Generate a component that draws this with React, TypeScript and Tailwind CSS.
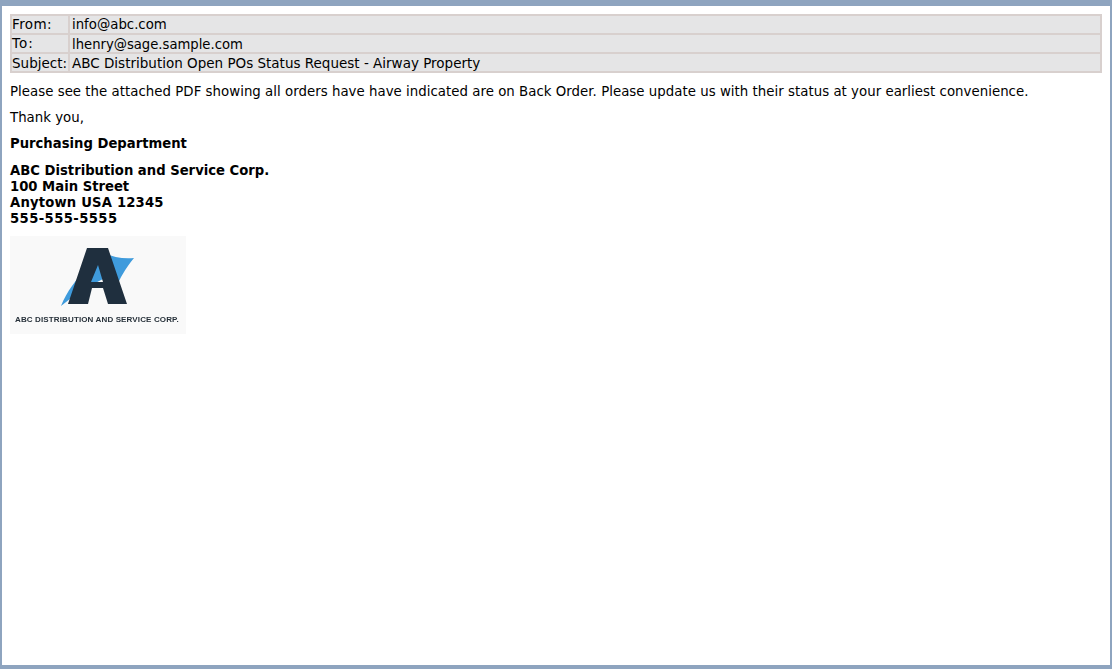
const HEADERS = [
  { label: 'From:', value: 'info@abc.com', labelClass: 'tracking-[0.4px]', valueClass: 'text-[13.3px]' },
  { label: 'To:', value: 'lhenry@sage.sample.com', labelClass: 'tracking-[1px]', valueClass: 'text-[13.2px] pt-[2px]' },
  { label: 'Subject:', value: 'ABC Distribution Open POs Status Request - Airway Property', labelClass: 'pt-[1px]', valueClass: 'text-[13.5px] pt-[1px]' },
];

function AbcLogo() {
  return (
    <div className="w-[176px] h-[98px] bg-[#f9f9f9] mt-[9px] relative">
      <svg width="176" height="98" viewBox="0 0 176 98" className="block blur-[0.3px]">
        <path d="M51 70 C57 55 66 44 76 33 L92 16 C102 21 112 23 124 22 C115 33 110 42 106 52 L93 43 L70 55 Z" fill="#3f9bdc" />
        <path d="M77 12 H98 L117 68 H98 L93 52 H82 L78 68 H58 Z M88 29 L81 46 H93 Z" fill="#1f2f3e" fillRule="evenodd" />
      </svg>
      <span className="absolute left-[5px] top-[78px] text-[8px] leading-[12px] font-bold text-[#27313a] whitespace-nowrap font-['Liberation_Sans',sans-serif] tracking-[0.13px] blur-[0.3px]">
        ABC DISTRIBUTION AND SERVICE CORP.
      </span>
    </div>
  );
}

export default function App() {
  return (
    <div className="w-[1112px] h-[669px] bg-[#8ea4bf] pt-[6px] px-[2px] pb-[4px] font-['DejaVu_Sans',Verdana,sans-serif] text-[13.33px] text-black overflow-hidden">
      <div className="h-full bg-white pt-[8px] px-[8px]">
        {/* Header table */}
        <div className="border-2 border-[#d8d0ce] bg-[#e5e5e6] text-[13.5px]">
          {HEADERS.map((row, i) => (
            <div key={row.label} className={`flex items-center ${i > 0 ? 'h-[19px] border-t-2 border-[#d8d0ce]' : 'h-[17px]'}`}>
              <span className={`w-[58px] shrink-0 border-r-2 border-[#d8d0ce] h-full flex items-center whitespace-nowrap ${row.labelClass}`}>{row.label}</span>
              <span className={`pl-[2px] ${row.valueClass}`}>{row.value}</span>
            </div>
          ))}
        </div>

        <p className="mt-[11px] leading-[16px] tracking-[0.027px]">
          Please see the attached PDF showing all orders have have indicated are on Back Order. Please update us with their status at your earliest convenience.
        </p>
        <p className="mt-[10px] leading-[16px]">Thank you,</p>
        <p className="mt-[10px] leading-[16px] font-bold text-[13.2px]">Purchasing Department</p>
        <p className="mt-[11px] leading-[16px] font-bold text-[13.2px]">
          ABC Distribution and Service Corp.
          <br />
          100 Main Street
          <br />
          <span className="tracking-[0.18px]">Anytown USA 12345</span>
          <br />
          <span className="tracking-[0.4px]">555-555-5555</span>
        </p>
        <AbcLogo />
      </div>
    </div>
  );
}
